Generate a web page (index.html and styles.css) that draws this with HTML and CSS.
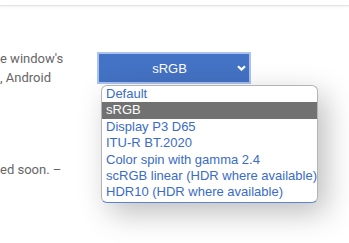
FILE: index.html
```html
<!DOCTYPE html>
<html>
<head>
  <title>Flags</title>
  <link rel="stylesheet" href="styles.css">
</head>
<body>
  <header class="topbar"></header>

  <main class="flag">
    <div class="desc">
      <p class="desc-text">e window's<br>, Android</p>
      <p class="desc-note">ed soon. –</p>
    </div>

    <div class="control">
      <div class="select-box">
        <span class="select-value">sRGB</span>
        <svg class="chevron" width="9" height="6" viewBox="0 0 9 6">
          <path d="M1 1.2 L4.5 4.6 L8 1.2" fill="none" stroke="#fff" stroke-width="2.2"/>
        </svg>
      </div>

      <ul class="options">
        <li>Default</li>
        <li class="selected">sRGB</li>
        <li>Display P3 D65</li>
        <li>ITU-R BT.2020</li>
        <li>Color spin with gamma 2.4</li>
        <li>scRGB linear (HDR where available)</li>
        <li>HDR10 (HDR where available)</li>
      </ul>
    </div>
  </main>
</body>
</html>
```

FILE: styles.css
```css
html, body {
  height: 100%;
}
body {
  margin: 0;
  background: #fff;
  font-family: Roboto, 'Liberation Sans', sans-serif;
}
.topbar {
  height: 5px;
  border-bottom: 1px solid #e3e3e3;
  box-shadow: 0 1px 3px rgba(0,0,0,0.06);
}
.flag {
  display: flex;
  min-height: 237px;
}
.desc {
  width: 97px;
  margin-top: 44px;
  color: #666;
  font-size: 13px;
  line-height: 18.5px;
  white-space: nowrap;
}
.desc p {
  margin: 0;
}
.desc .desc-note {
  margin-top: 74px;
}
.control {
  position: relative;
  margin-top: 46px;
}
.select-box {
  display: flex;
  align-items: center;
  width: 147px;
  height: 28px;
  padding-left: 3px;
  background: #4472c4;
  border: 2px solid #a9c2ef;
  color: #fff;
  font-family: 'Liberation Sans', Arial, sans-serif;
  font-size: 13px;
}
.select-value {
  flex: 1;
  text-align: center;
}
.chevron {
  margin-right: 3px;
}
.options {
  position: absolute;
  left: 4px;
  top: 33px;
  width: 215px;
  margin: 0;
  padding: 0 0 1px;
  list-style: none;
  background: #fff;
  border: 1px solid #b4b4b4;
  border-bottom-color: #5b84d0;
  border-radius: 6px;
  box-shadow: 8px 10px 30px rgba(0,0,0,0.26);
  font-family: 'Liberation Sans', Arial, sans-serif;
  font-size: 13px;
  line-height: 16.4px;
  color: #3a6bc8;
  white-space: nowrap;
}
.options li {
  padding-left: 4px;
}
.options .selected {
  background: #717171;
  color: #fff;
}
```
